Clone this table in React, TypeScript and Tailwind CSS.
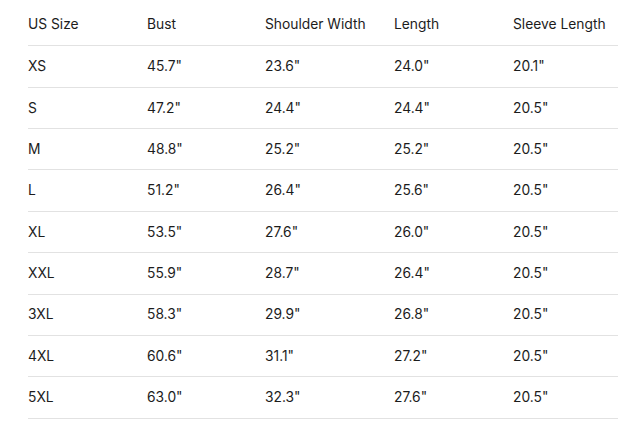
const headers = ["US Size", "Bust", "Shoulder Width", "Length", "Sleeve Length"];

const rows = [
  ["XS", '45.7"', '23.6"', '24.0"', '20.1"'],
  ["S", '47.2"', '24.4"', '24.4"', '20.5"'],
  ["M", '48.8"', '25.2"', '25.2"', '20.5"'],
  ["L", '51.2"', '26.4"', '25.6"', '20.5"'],
  ["XL", '53.5"', '27.6"', '26.0"', '20.5"'],
  ["XXL", '55.9"', '28.7"', '26.4"', '20.5"'],
  ["3XL", '58.3"', '29.9"', '26.8"', '20.5"'],
  ["4XL", '60.6"', '31.1"', '27.2"', '20.5"'],
  ["5XL", '63.0"', '32.3"', '27.6"', '20.5"'],
];

const colWidths = ["w-[119px]", "w-[118px]", "w-[129px]", "w-[119px]", ""];

export default function App() {
  return (
    <div className="min-h-screen bg-white pt-[4.4px] pl-[28px] pr-[5px] font-['Inter',sans-serif] text-[13.8px] text-[#1c1c1c]">
      <table className="w-[590px] table-fixed border-collapse">
        <thead>
          <tr className="border-b border-[#e2e2e2]">
            {headers.map((h, i) => (
              <th key={h} className={`${colWidths[i]} h-[41.4px] p-0 text-left align-middle font-normal`}>
                {h}
              </th>
            ))}
          </tr>
        </thead>
        <tbody>
          {rows.map((r) => (
            <tr key={r[0]} className="border-b border-[#e2e2e2]">
              {r.map((c, i) => (
                <td key={i} className="h-[41.4px] p-0 align-middle">
                  {c}
                </td>
              ))}
            </tr>
          ))}
        </tbody>
      </table>
    </div>
  );
}
